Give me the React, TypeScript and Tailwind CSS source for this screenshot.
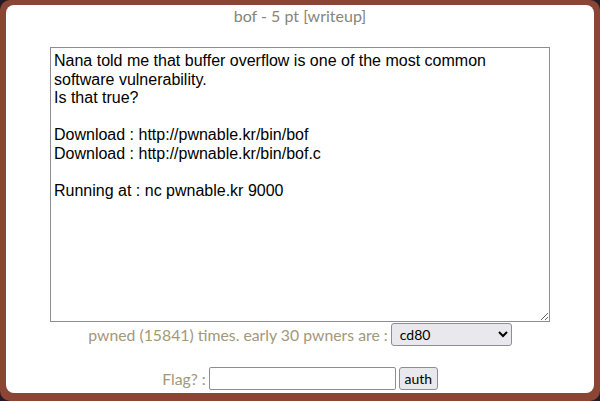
import React from "react"

const problem = `Nana told me that buffer overflow is one of the most common
software vulnerability.
Is that true?

Download : http://pwnable.kr/bin/bof
Download : http://pwnable.kr/bin/bof.c

Running at : nc pwnable.kr 9000`

export default function App() {
  return (
    <div className="w-[600px] h-[401px] bg-[#241a26]">
      <div className="w-full h-full bg-[#8a4535] rounded-[10px] pt-[5px] px-[6px] pb-[8px]">
        <div className="w-full h-full bg-white rounded-[8px] flex flex-col items-center font-['Lato',sans-serif]">
          <div className="mt-[1px] h-[20px] leading-[20px] text-[16px] text-[#85857a]">bof - 5 pt [writeup]</div>
          <textarea
            readOnly
            defaultValue={problem}
            className="mt-[21px] w-[500px] h-[275px] border border-[#8f8c96] px-[3px] pt-[4px] pb-[2px] text-[16px] leading-[18.5px] text-black font-['Liberation_Sans',Arial,sans-serif] resize outline-none"
          />
          <div className="mt-[1px] flex items-center text-[15.8px] text-[#a39878]">
            <span>pwned (15841) times. early 30 pwners are :</span>
            <select
              defaultValue="cd80"
              className="ml-[3px] w-[121px] h-[23px] border border-[#8f8c96] rounded-[3px] bg-[#e9e9ed] text-black text-[14px] pl-[4px]"
            >
              <option>cd80</option>
            </select>
          </div>
          <div className="mt-[20px] flex items-center text-[15.8px] text-[#a39878]">
            <span>Flag? :</span>
            <input className="ml-[3px] w-[187px] h-[23px] border border-[#8f8c96] rounded-[2px] outline-none" />
            <button className="ml-[3px] w-[39px] h-[23px] border border-[#8f8c96] rounded-[3px] bg-[#e9e9ed] text-black text-[14px]">auth</button>
          </div>
        </div>
      </div>
    </div>
  )
}
